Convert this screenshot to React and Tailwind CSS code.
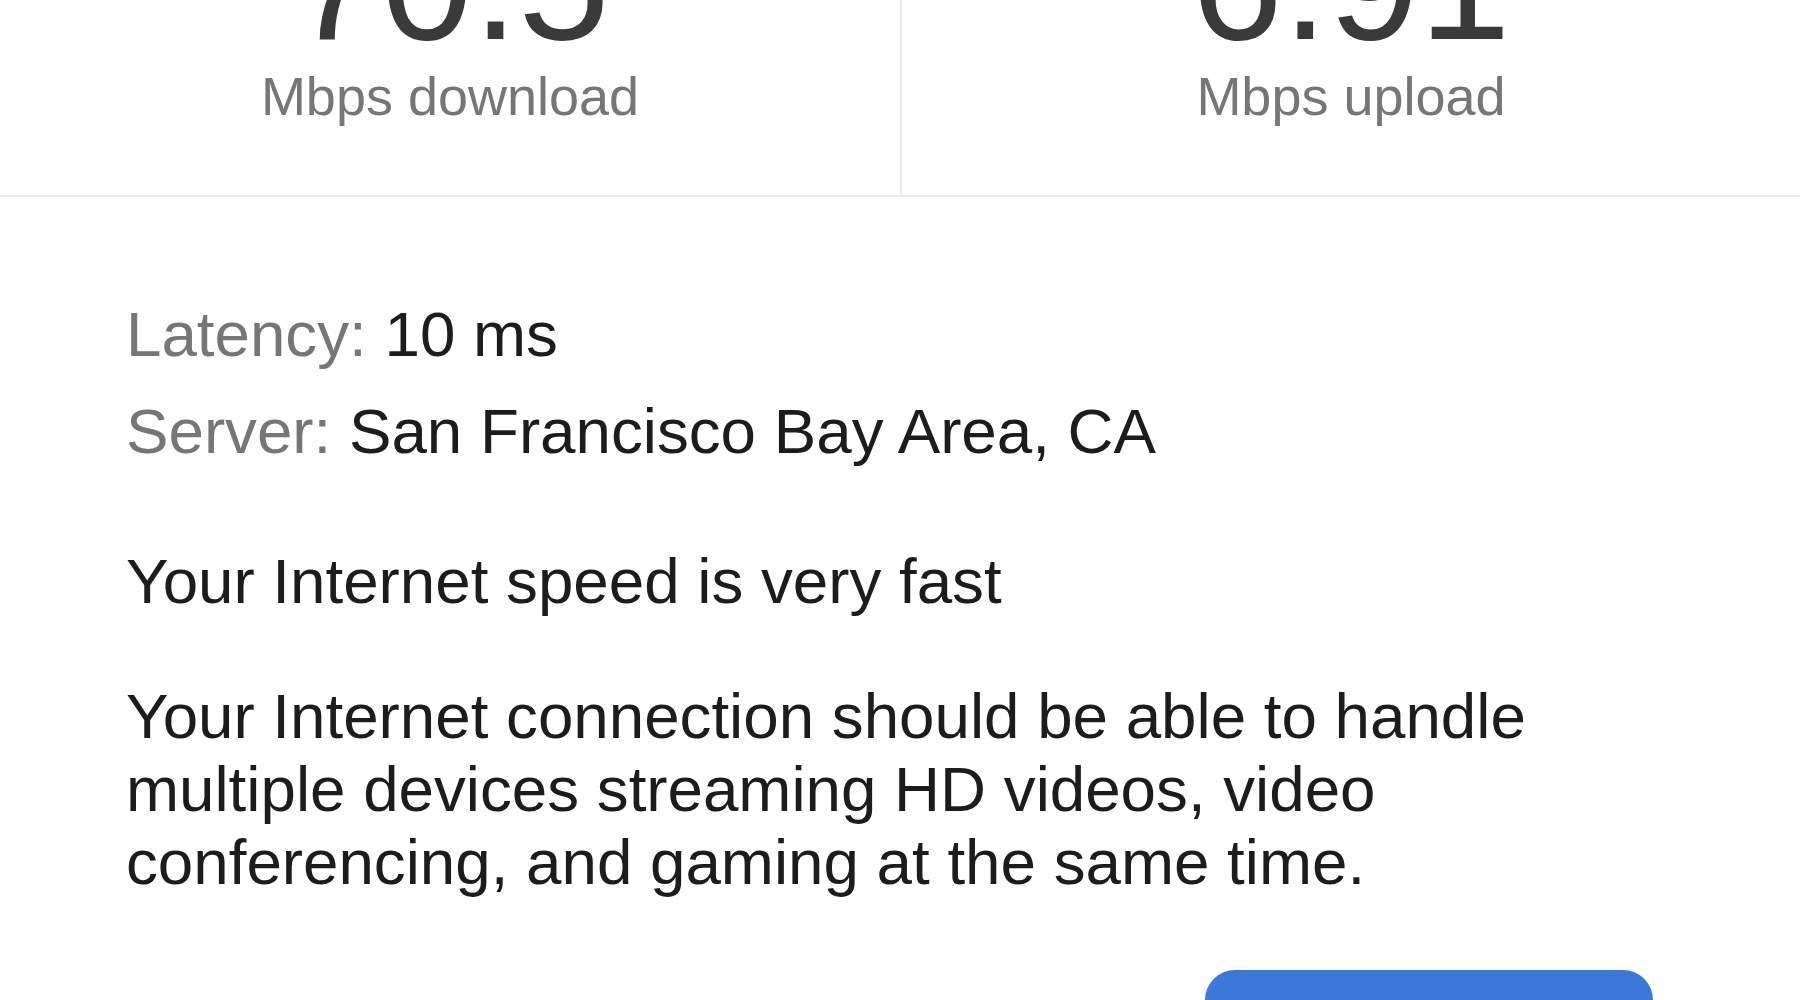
import React from 'react';

const font = { fontFamily: '"Liberation Sans", Arial, Helvetica, sans-serif' };

const Result = ({ value, label, divider }) => (
    <div className={`flex flex-col items-center ${divider ? 'border-l-2 border-[#ececec]' : ''}`}>
        <div className="text-[164px] leading-[150px] text-[#3a3a3a] mt-[-92px]">{value}</div>
        <div className="text-[54px] leading-none text-[#767676] mt-[11px] pb-[72px]">{label}</div>
    </div>
);

const App = () => {
    return (
        <div className="w-[1800px] h-[1000px] overflow-hidden bg-white" style={font}>
            <div className="grid grid-cols-2 border-b-2 border-[#ececec]">
                <Result value="70.5" label="Mbps download" />
                <Result value="6.91" label="Mbps upload" divider />
            </div>

            <div className="pl-[126px] pr-[147px] pt-[89px] text-[63.7px] text-[#1c1c1c]">
                <div className="leading-[96px]">
                    <span className="text-[#767676]">Latency:</span> 10 ms
                </div>
                <div className="leading-[98px]">
                    <span className="text-[#767676]">Server:</span> San Francisco Bay Area, CA
                </div>

                <p className="leading-[73px] mt-[64px]">Your Internet speed is very fast</p>
                <p className="leading-[73px] mt-[62px]">
                    Your Internet connection should be able to handle multiple devices streaming HD videos, video conferencing, and gaming at the same time.
                </p>

                <div className="flex justify-end mt-[72px]">
                    <button
                        type="button"
                        className="w-[448px] h-[112px] rounded-[30px] bg-[#3b78d8] text-white text-[44px] font-bold tracking-wide"
                    >
                        TEST AGAIN
                    </button>
                </div>
            </div>
        </div>
    );
};

export default App;
